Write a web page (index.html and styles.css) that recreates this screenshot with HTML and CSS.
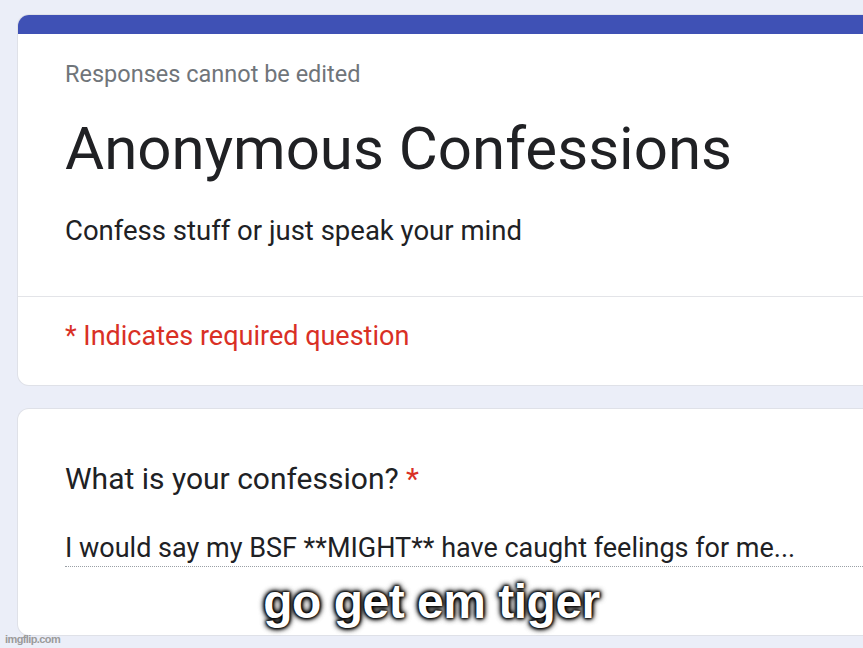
FILE: index.html
```html
<!DOCTYPE html>
<html>
<head>
<meta charset="utf-8">
<link rel="stylesheet" href="styles.css">
</head>
<body>
<div class="page">
  <div class="card header-card">
    <div class="accent"></div>
    <div class="head-main">
      <div class="note">Responses cannot be edited</div>
      <div class="title">Anonymous Confessions</div>
      <div class="desc">Confess stuff or just speak your mind</div>
    </div>
    <div class="head-foot">
      <div class="required">* Indicates required question</div>
    </div>
  </div>
  <div class="card question-card">
    <div class="question">What is your confession? <span class="star">*</span></div>
    <div class="answer">I would say my BSF **MIGHT** have caught feelings for me...</div>
  </div>
</div>
<div class="caption">go get em tiger</div>
<div class="watermark">imgflip.com</div>
</body>
</html>
```
FILE: styles.css
```css
html, body {
  margin: 0;
  padding: 0;
  width: 863px;
  height: 648px;
  overflow: hidden;
  background: #ebeef8;
  font-family: Roboto, "Liberation Sans", sans-serif;
}
body { position: relative; }
.page {
  padding: 15px 0 0 18px;
  display: flex;
  flex-direction: column;
  gap: 24px;
  width: 845px;
}
.card {
  background: #ffffff;
  border-radius: 11px 0 0 11px;
  box-shadow: 0 0 0 1px #dfe1e8;
  overflow: hidden;
}
.accent {
  height: 19px;
  background: #3f51b5;
}
.head-main {
  padding: 26px 0 48px 47px;
  border-bottom: 1px solid #e3e4e8;
}
.note {
  font-size: 23.5px;
  line-height: 28px;
  color: #70757a;
}
.title {
  margin-top: 26px;
  font-size: 60px;
  line-height: 70px;
  color: #202124;
}
.desc {
  margin-top: 30px;
  font-size: 27.5px;
  line-height: 34px;
  color: #202124;
}
.head-foot {
  padding: 22px 0 32px 47px;
}
.required {
  font-size: 27px;
  line-height: 34px;
  color: #d93025;
}
.question-card {
  padding: 52px 0 0 47px;
  height: 174px;
}
.question {
  font-size: 30px;
  line-height: 36px;
  color: #202124;
}
.star { color: #d93025; }
.answer {
  margin-top: 34px;
  font-size: 27px;
  line-height: 34px;
  color: #202124;
  padding-bottom: 1px;
  border-bottom: 1px dotted #9aa0a6;
  white-space: nowrap;
}
.caption {
  position: absolute;
  left: 0;
  right: 0;
  top: 575px;
  text-align: center;
  font-family: "Liberation Sans", Arial, sans-serif;
  font-weight: bold;
  font-size: 48px;
  line-height: 54px;
  letter-spacing: -0.5px;
  color: #ffffff;
  text-shadow: 0 0 2px #000, 0 0 3px #000, 0 0 4px #000, 0 0 6px #000, 0 0 6px #000;
}
.watermark {
  position: absolute;
  left: 5px;
  bottom: 3px;
  font-family: "Liberation Sans", Arial, sans-serif;
  font-weight: bold;
  font-size: 11px;
  letter-spacing: -0.6px;
  color: #9b9b9b;
}
```
